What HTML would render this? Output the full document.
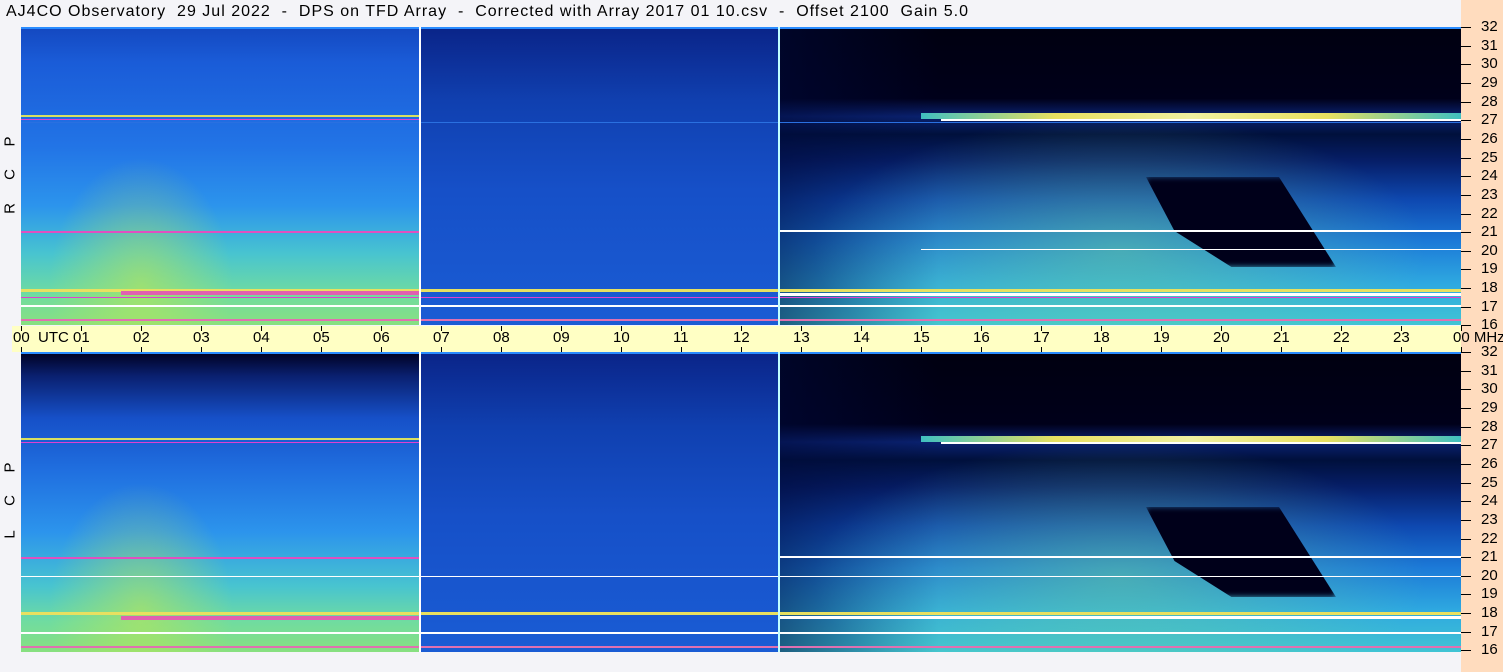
<!DOCTYPE html>
<html><head><meta charset="utf-8"><style>
body{margin:0;width:1503px;height:672px;background:#f4f4f8;position:relative;overflow:hidden;font-family:"Liberation Sans",sans-serif}
.t{position:absolute;left:6px;top:3px;font-size:16px;letter-spacing:1px;color:#000;white-space:pre}
.ax{position:absolute;left:1461px;top:0;width:42px;height:672px;background:#ffdcbe}
.tb{position:absolute;left:12px;top:326px;width:1449px;height:26px;background:#ffffc4}
.p{position:absolute;left:21px;width:1440px;height:298px;overflow:hidden;background:#000}
.p div{position:absolute}
.A{left:0;top:0;width:398px;height:100%;background:linear-gradient(#1448c0 0,#1a5cd8 12%,#2274e6 40%,#2c94ec 60%,#48c4d0 76%,#70dca0 90%,#88e080 100%)}
.Ay{left:20px;top:120px;width:200px;height:200px;background:radial-gradient(ellipse at 50% 70%,rgba(190,230,80,.6),rgba(190,230,80,0) 65%)}
.B{left:398px;top:0;width:360px;height:100%;background:linear-gradient(#0a2488 0,#1040b0 25%,#1650c8 55%,#1a5cd4 100%)}
.C{left:758px;top:0;width:682px;height:100%;background:linear-gradient(#000010 0,#00001a 24%,#0a2270 30%,#00103c 36%,#061e68 45%,#0e48b0 58%,#1c7ad8 72%,#2ea8e0 86%,#40c4d4 100%)}
.Cl{left:758px;top:0;width:160px;height:100%;background:linear-gradient(90deg,rgba(0,10,60,.55),rgba(0,10,60,0))}
.Cy{left:758px;top:0;width:682px;height:100%;background:radial-gradient(ellipse 45% 45% at 50% 75%,rgba(120,220,140,.45),rgba(120,220,140,0))}
.blk{left:1125px;top:150px;width:190px;height:90px;background:#00001a;clip-path:polygon(0 0,70% 0,100% 100%,45% 100%,15% 60%);filter:blur(3px)}
.l{height:2px}
.vl{top:0;width:2px;height:100%}
.lab{position:absolute;left:2px;font-size:15px;transform:rotate(-90deg);width:16px;text-align:center}
.fq{position:absolute;left:1461px;font-size:15px}
.fq span{position:absolute;left:0;top:0;width:10px;border-top:1px solid #000}
.fq b{font-weight:normal;position:absolute;left:20px;top:-9px}
.tl{position:absolute;top:329px;font-size:15px;white-space:nowrap}
</style></head><body>
<div class="t">AJ4CO Observatory  29 Jul 2022  -  DPS on TFD Array  -  Corrected with Array 2017 01 10.csv  -  Offset 2100  Gain 5.0</div>
<div class="ax"></div>
<div class="tb"></div>

<div class="p" style="top:27px">
<div class="A"></div><div class="Ay"></div><div class="B"></div><div class="C"></div><div class="Cl"></div><div class="Cy"></div><div class="blk"></div>
<div class="l" style="left:0;top:0;width:1440px;background:#2a8cff"></div>
<div class="l" style="left:0;top:88px;width:398px;background:#d8e060"></div>
<div class="l" style="left:0;top:92px;width:398px;background:#e040d0;height:1px"></div>
<div class="l" style="left:900px;top:86px;width:540px;height:6px;background:linear-gradient(90deg,#40c0c0,#e8e060,#f0f0a0,#e8e060,#40c0c0)"></div>
<div class="l" style="left:920px;top:92px;width:520px;background:#ffffff"></div>
<div class="l" style="left:0;top:95px;width:1440px;background:#2a70e0;height:1px"></div>
<div class="l" style="left:0;top:204px;width:398px;background:#e050c0"></div>
<div class="l" style="left:758px;top:203px;width:682px;background:#ffffff"></div>
<div class="l" style="left:900px;top:222px;width:540px;background:#ffffff;height:1px"></div>
<div class="l" style="left:0;top:262px;width:1440px;background:#e8e060;height:3px"></div>
<div class="l" style="left:100px;top:264px;width:300px;height:4px;background:#e060b0"></div>
<div class="l" style="left:758px;top:266px;width:682px;height:3px;background:#ffffff"></div>
<div class="l" style="left:0;top:270px;width:1440px;height:1px;background:#e040d0"></div>
<div class="l" style="left:0;top:278px;width:1440px;height:2px;background:#ffffff"></div>
<div class="l" style="left:0;top:292px;width:1440px;height:2px;background:#e070b0"></div>
<div class="vl" style="left:398px;background:#fff"></div>
<div class="vl" style="left:757px;background:#c0ffff"></div>
</div>

<div class="p" style="top:352px;height:300px">
<div class="A" style="background:linear-gradient(#000020 0,#0a2070 8%,#1650c8 22%,#2070e0 40%,#2c94ec 60%,#48c4d0 78%,#70dca0 90%,#88e080 100%)"></div><div class="Ay"></div><div class="B"></div><div class="C"></div><div class="Cl"></div><div class="Cy"></div><div class="blk" style="top:155px"></div>
<div class="l" style="left:0;top:0;width:1440px;background:#2a8cff"></div>
<div class="l" style="left:0;top:86px;width:398px;background:#d8e060"></div>
<div class="l" style="left:0;top:90px;width:398px;background:#e040d0;height:1px"></div>
<div class="l" style="left:900px;top:84px;width:540px;height:6px;background:linear-gradient(90deg,#40c0c0,#e8e060,#f0f0a0,#e8e060,#40c0c0)"></div>
<div class="l" style="left:920px;top:90px;width:520px;background:#ffffff"></div>
<div class="l" style="left:0;top:205px;width:398px;background:#e050c0"></div>
<div class="l" style="left:758px;top:204px;width:682px;background:#ffffff"></div>
<div class="l" style="left:0;top:224px;width:1440px;background:#ffffff;height:1px"></div>
<div class="l" style="left:0;top:260px;width:1440px;background:#e8e060;height:3px"></div>
<div class="l" style="left:100px;top:264px;width:300px;height:4px;background:#e060b0"></div>
<div class="l" style="left:758px;top:264px;width:682px;height:3px;background:#ffffff"></div>
<div class="l" style="left:0;top:280px;width:1440px;height:2px;background:#ffffff"></div>
<div class="l" style="left:0;top:294px;width:1440px;height:2px;background:#e070b0"></div>
<div class="vl" style="left:398px;background:#fff"></div>
<div class="vl" style="left:757px;background:#c0ffff"></div>
</div>

<div class="lab" style="top:133px">P</div><div class="lab" style="top:166px">C</div><div class="lab" style="top:200px">R</div>
<div class="lab" style="top:459px">P</div><div class="lab" style="top:492px">C</div><div class="lab" style="top:526px">L</div>

<div id="ticks"></div>
<script>
var h='';
for(var i=0;i<=16;i++){var f=32-i;
 var y1=27+i*18.65, y2=352+i*18.65;
 h+='<div class="fq" style="top:'+y1+'px"><span></span><b>'+f+'</b></div>';
 h+='<div class="fq" style="top:'+y2+'px"><span></span><b>'+f+'</b></div>';}
for(var k=0;k<=24;k++){var x=21+k*60;var lab=(k==24?'00':(k<10?'0'+k:''+k));
 var s=lab; if(k==0)s='00&nbsp; UTC'; if(k==24)s='00 MHz';
 h+='<div class="tl" style="left:'+(x-8)+'px">'+s+'</div>';
 h+='<div style="position:absolute;left:'+x+'px;top:326px;width:1px;height:5px;background:#000"></div>';
 h+='<div style="position:absolute;left:'+x+'px;top:347px;width:1px;height:5px;background:#000"></div>';}
document.getElementById('ticks').innerHTML=h;
</script>
</body></html>
